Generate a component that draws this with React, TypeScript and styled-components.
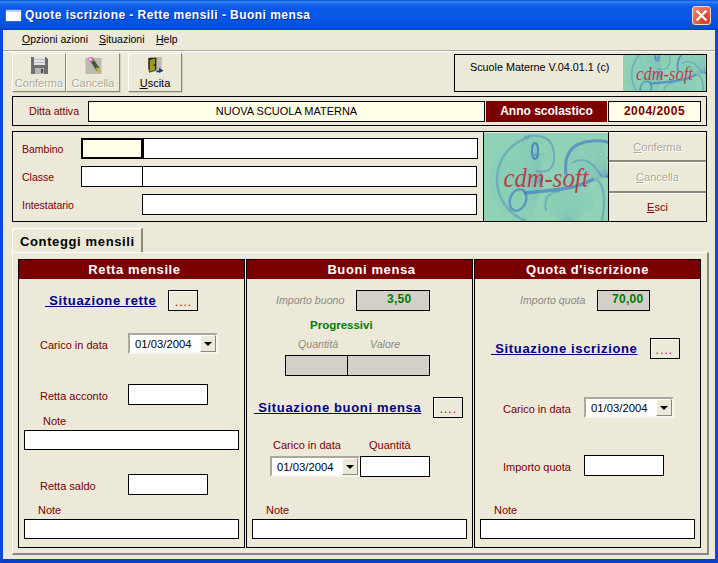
import React from 'react';
import styled, { createGlobalStyle } from 'styled-components';

const FACE = '#ece9d8';
const DARK_RED = '#7b0000';
const NAVY = '#00008b';
const GREEN = '#007b00';
const GREY_FIELD = '#d4d0c8';

const GlobalStyle = createGlobalStyle`
  html, body { margin: 0; padding: 0; background: ${FACE}; }
  body { font-family: "Liberation Sans", Arial, sans-serif; font-size: 11px; color: #000; }
  * { box-sizing: border-box; }
`;

const Window = styled.div`
  width: 718px;
  height: 563px;
  display: flex;
  flex-direction: column;
  overflow: hidden;
`;

const TitleBar = styled.div`
  height: 30px;
  flex: none;
  display: flex;
  align-items: center;
  padding: 0 7px 0 6px;
  background: linear-gradient(to bottom, #0a4fd8 0, #3a86f4 2px, #1a68ee 4px, #0a58e6 8px, #0655e4 20px, #0650d8 27px, #0440c4 30px);
`;

const AppIcon = styled.span`
  width: 15px;
  height: 11px;
  margin-top: 1px;
  background: #fff;
  border-top: 2px solid #bcd4fa;
  box-shadow: 0 0 1px #cfe0ff;
`;

const TitleText = styled.span`
  margin-left: 4px;
  color: #fff;
  font-weight: 700;
  font-size: 12px;
  letter-spacing: 0.45px;
  text-shadow: 1px 1px 0 #0a2f9c;
  white-space: nowrap;
`;

const CloseButton = styled.span`
  margin-left: auto;
  width: 19px;
  height: 19px;
  display: block;
  border: 1px solid #f4d8d0;
  border-radius: 3px;
  background: radial-gradient(circle at 70% 75%, #c83a18, #e8664a 55%, #f09078);
`;

const WindowBody = styled.div`
  flex: 1;
  display: flex;
  flex-direction: column;
  background: ${FACE};
  border-left: 3px solid #0a48dc;
  border-right: 3px solid #0a48dc;
  border-bottom: 4px solid #0a3fc8;
`;

const MenuBar = styled.div`
  height: 22px;
  flex: none;
  display: flex;
  padding: 2px 0 0 19px;
  border-bottom: 1px solid #fff;
  box-shadow: inset 0 -2px 0 -1px #aca899;
`;

const MenuItem = styled.span<{ $w: number }>`
  width: ${p => p.$w}px;
  font-size: 10.5px;
  line-height: 14px;
`;

const Key = styled.span`
  text-decoration: underline;
`;

const Toolbar = styled.div`
  height: 41px;
  flex: none;
  display: flex;
  align-items: flex-start;
  padding: 1px 8px 0 9px;
`;

const ToolButton = styled.div<{ $w: number; $left?: number; $off?: boolean }>`
  width: ${p => p.$w}px;
  height: 39px;
  margin-left: ${p => p.$left || 0}px;
  display: flex;
  flex-direction: column;
  align-items: center;
  padding-top: 3px;
  background: ${FACE};
  border: 1px solid;
  border-color: #fff #8a8876 #8a8876 #fff;
  box-shadow: 1px 1px 0 #d0cdbc;
  font-size: 11px;
  line-height: 12px;
  color: ${p => (p.$off ? '#aca899' : '#000')};
  text-shadow: ${p => (p.$off ? '1px 1px 0 #fff' : 'none')};
  svg { flex: none; margin-bottom: 3px; }
`;

const VersionPanel = styled.div`
  margin: 1px 0 0 auto;
  width: 253px;
  height: 38px;
  display: flex;
  border: 1px solid #000;
`;

const VersionText = styled.div`
  flex: 1;
  padding: 5px 0 0 15px;
  font-size: 10.8px;
  line-height: 14px;
`;

const VersionLogo = styled.div`
  width: 83px;
  flex: none;
  svg { display: block; }
`;

const Sections = styled.div`
  display: flex;
  flex-direction: column;
  padding: 0 8px 0 9px;
`;

const CompanyRow = styled.div`
  height: 30px;
  margin-top: 3px;
  display: flex;
  align-items: center;
  padding: 0 5px 0 16px;
  border: 1px solid #000;
`;

const CompanyLabel = styled.span`
  width: 59px;
  flex: none;
  color: ${DARK_RED};
  font-size: 10.6px;
`;

const CompanyName = styled.div`
  width: 397px;
  height: 21px;
  flex: none;
  display: flex;
  align-items: center;
  justify-content: center;
  background: #ffffe8;
  border: 1px solid #000;
  font-size: 11px;
`;

const YearCaption = styled.div`
  width: 121px;
  height: 21px;
  flex: none;
  margin-left: 1px;
  display: flex;
  align-items: center;
  justify-content: center;
  background: ${DARK_RED};
  color: #fff;
  font-weight: 700;
  font-size: 12px;
`;

const YearValue = styled.div`
  width: 93px;
  height: 21px;
  flex: none;
  margin-left: 1px;
  display: flex;
  align-items: center;
  justify-content: center;
  background: #ffffe8;
  border: 1px solid #000;
  color: ${DARK_RED};
  font-weight: 700;
  font-size: 12px;
  letter-spacing: 0.5px;
`;

const PupilPanel = styled.div`
  height: 91px;
  margin-top: 5px;
  display: flex;
  border: 1px solid #000;
`;

const PupilFields = styled.div`
  width: 471px;
  flex: none;
  display: flex;
  flex-direction: column;
  gap: 7px;
  padding: 6px 0 0 9px;
  border-right: 1px solid #000;
`;

const PupilRow = styled.div`
  height: 21px;
  display: flex;
  align-items: center;
`;

const PupilLabel = styled.span`
  width: 59px;
  flex: none;
  color: ${DARK_RED};
  font-size: 10.5px;
`;

const Box = styled.input<{ $w: number; $h?: number; $left?: number; $fill?: string; $thick?: boolean }>`
  width: ${p => p.$w}px;
  height: ${p => p.$h || 21}px;
  flex: none;
  margin: 0 0 0 ${p => p.$left || 0}px;
  padding: 0;
  display: block;
  background: ${p => p.$fill || '#fff'};
  border: ${p => (p.$thick ? 2 : 1)}px solid #000;
  border-radius: 0;
  outline: none;
`;

const PupilLogo = styled.div`
  width: 125px;
  flex: none;
  padding: 1px 0 0;
  border-right: 1px solid #000;
  svg { display: block; }
`;

const PupilActions = styled.div`
  flex: 1;
  display: flex;
  flex-direction: column;
`;

const ActionButton = styled.div<{ $off?: boolean }>`
  flex: 1;
  display: flex;
  align-items: center;
  justify-content: center;
  border-top: 1px solid #fff;
  border-bottom: 2px solid #8a8876;
  &:last-child { border-bottom: none; }
  font-size: 11px;
  color: ${p => (p.$off ? '#aca899' : DARK_RED)};
  text-shadow: ${p => (p.$off ? '1px 1px 0 #fff' : 'none')};
`;

const TabStrip = styled.div`
  height: 24px;
  margin-top: 6px;
  display: flex;
`;

const Tab = styled.div`
  width: 131px;
  height: 24px;
  padding: 5px 0 0 7px;
  background: ${FACE};
  border-top: 1px solid #fff;
  border-left: 1px solid #fff;
  border-right: 2px solid #8a8876;
  border-top-left-radius: 3px;
  font-weight: 700;
  font-size: 13px;
  line-height: 15px;
  letter-spacing: 0.63px;
  white-space: nowrap;
`;

const TabPanel = styled.div`
  width: 697px;
  height: 303px;
  padding: 6px 0 0 5px;
  border-top: 1px solid #fff;
  border-left: 1px solid #fff;
  border-right: 2px solid #8a8876;
  border-bottom: 2px solid #8a8876;
`;

const Columns = styled.div`
  display: grid;
  grid-template-columns: repeat(3, 227px);
  gap: 1px;
  height: 289px;
`;

const Column = styled.div`
  display: flex;
  flex-direction: column;
  border: 1px solid #000;
`;

const ColumnHead = styled.div<{ $shift?: number }>`
  height: 19px;
  flex: none;
  display: flex;
  align-items: center;
  justify-content: center;
  padding-left: ${p => p.$shift || 0}px;
  background: ${DARK_RED};
  color: #fff;
  font-weight: 700;
  font-size: 13px;
  letter-spacing: 0.6px;
`;

const Row = styled.div<{ $top: number; $left: number; $gap?: number }>`
  display: flex;
  align-items: center;
  flex: none;
  margin-top: ${p => p.$top}px;
  padding-left: ${p => p.$left}px;
  gap: ${p => p.$gap || 0}px;
`;

const Label = styled.span<{ $w?: number }>`
  width: ${p => (p.$w ? `${p.$w}px` : 'auto')};
  flex: none;
  color: ${DARK_RED};
  font-size: 11px;
  line-height: 13px;
  white-space: nowrap;
`;

// etichetta accanto a un campo: nell'originale sta un po' sotto il centro
const FieldLabel = styled(Label)`
  padding-top: 3px;
`;

const GhostLabel = styled.span<{ $w?: number }>`
  width: ${p => (p.$w ? `${p.$w}px` : 'auto')};
  flex: none;
  color: #8c8a7e;
  font-style: italic;
  font-size: 10.6px;
  line-height: 13px;
  white-space: nowrap;
`;

const Progress = styled.span`
  color: ${GREEN};
  font-weight: 700;
  font-size: 11.5px;
  line-height: 14px;
`;

const ReadOut = styled.div<{ $w: number; $left?: number; $pad?: number }>`
  width: ${p => p.$w}px;
  height: 21px;
  flex: none;
  margin-left: ${p => p.$left || 0}px;
  padding-left: ${p => p.$pad || 0}px;
  background: ${GREY_FIELD};
  border: 1px solid #000;
  color: ${GREEN};
  font-weight: 700;
  font-size: 12px;
  line-height: 16px;
  letter-spacing: 0.3px;
`;

const SituationLink = styled.span`
  flex: none;
  color: ${NAVY};
  font-weight: 700;
  font-size: 13px;
  line-height: 15px;
  letter-spacing: 0.65px;
  text-decoration: underline;
  white-space: pre;
`;

const DotsButton = styled.div`
  width: 30px;
  height: 21px;
  flex: none;
  display: flex;
  justify-content: center;
  padding-top: 1px;
  background: ${FACE};
  border: 1px solid #000;
  box-shadow: inset 1px 1px 0 #fff;
  color: #b00000;
  font-size: 12px;
  line-height: 20px;
  letter-spacing: 1px;
`;

const Combo = styled.div`
  width: 90px;
  height: 21px;
  flex: none;
  display: flex;
  align-items: center;
  justify-content: space-between;
  padding-left: 5px;
  background: #fff;
  border: 2px solid;
  border-color: #aca899 #f8f6ec #f8f6ec #aca899;
  font-size: 11.3px;
`;

const ComboArrow = styled.span`
  width: 16px;
  height: 17px;
  display: flex;
  align-items: center;
  justify-content: center;
  background: ${FACE};
  border: 1px solid;
  border-color: #fff #8a8876 #8a8876 #fff;
  &::before {
    content: '';
    border-left: 4px solid transparent;
    border-right: 4px solid transparent;
    border-top: 4px solid #000;
  }
`;

const DateCombo = () => (
  <Combo>
    01/03/2004
    <ComboArrow />
  </Combo>
);

// filo di linee tra un arco e un punto interno, come il disegno del logo
const fan = (cx: number, cy: number, r: number, a0: number, a1: number, n: number, ix: number, iy: number) => {
  let d = '';
  for (let i = 0; i <= n; i++) {
    const a = ((a0 + ((a1 - a0) * i) / n) * Math.PI) / 180;
    d += `M${(cx + r * Math.cos(a)).toFixed(1)} ${(cy + r * Math.sin(a)).toFixed(1)}L${ix} ${iy}`;
  }
  return d;
};

const Logo = ({ w, h, id }: { w: number; h: number; id: string }) => (
  <svg width={w} height={h} viewBox="0 0 124 88" preserveAspectRatio="xMidYMid slice">
    <defs>
      <filter id={id} x="-5%" y="-5%" width="110%" height="110%">
        <feGaussianBlur stdDeviation="0.7" />
      </filter>
    </defs>
    <rect width="124" height="88" fill="#8fd2b6" />
    <g fill="none" stroke="#3f72c0" filter={`url(#${id})`}>
      <path d={fan(50, 48, 45, 95, 275, 60, 58, 48)} strokeOpacity=".1" strokeWidth=".7" />
      <path d="M46 4A44 44 0 0 0 42 88" strokeOpacity=".35" strokeWidth="2.5" />
      <path d="M40 4Q68 -2 70 20T52 38" strokeOpacity=".4" strokeWidth="2" />
      <path d={fan(52, 20, 17, 0, 360, 40, 51, 22)} strokeOpacity=".1" strokeWidth=".6" />
      <ellipse cx="51" cy="18" rx="3" ry="8" strokeOpacity=".75" strokeWidth="2" />
      <ellipse cx="34" cy="67" rx="8" ry="11" strokeOpacity=".6" strokeWidth="2.4" transform="rotate(20 34 67)" />
      <path d="M82 42Q78 10 108 8T124 26" strokeOpacity=".6" strokeWidth="3" />
      <path d="M88 30Q104 20 118 44" strokeOpacity=".35" strokeWidth="2" />
      <path d={fan(109, 36, 29, 150, 290, 34, 124, 44)} strokeOpacity=".14" strokeWidth=".6" />
      <path d="M62 78Q58 60 76 58" strokeOpacity=".35" strokeWidth="2" />
      <path d={fan(84, 73, 26, 180, 360, 30, 84, 92)} strokeOpacity=".12" strokeWidth=".6" />
      <path d="M40 60Q62 58 78 56T110 46" strokeOpacity=".6" strokeWidth="3.5" />
      <path d="M112 46Q124 54 118 88" strokeOpacity=".35" strokeWidth="2.5" />
    </g>
    <text
      x="62"
      y="54"
      textAnchor="middle"
      fill="#b8404c"
      fontFamily='"Liberation Serif", serif'
      fontStyle="italic"
      fontSize="27"
      textLength="85"
      lengthAdjust="spacingAndGlyphs"
    >
      cdm-soft
    </text>
  </svg>
);

const FloppyIcon = () => (
  <svg width="17" height="17" viewBox="0 0 17 17">
    <path d="M0 0H15L17 2V17H0Z" fill="#6e6e6e" />
    <rect x="3" y="0" width="11" height="8" fill="#e4e4e4" />
    <rect x="3" y="2" width="11" height="1" fill="#bdbdbd" />
    <rect x="3" y="5" width="11" height="1" fill="#bdbdbd" />
    <rect x="4" y="11" width="9" height="6" fill="#b4b4b4" />
    <rect x="10" y="12" width="2" height="4" fill="#4a4a4a" />
  </svg>
);

const EraserIcon = () => (
  <svg width="17" height="17" viewBox="0 0 17 18">
    <rect x="0" y="1" width="17" height="17" fill="#bdbab0" />
    <path d="M3 1L7 0L15 12L12 15Z" fill="#3f5a2c" />
    <path d="M11 11L15 12L17 17L12 15Z" fill="#c8b048" />
    <path d="M2 1L7 0L9 4L5 6Z" fill="#d070c0" />
    <path d="M3 2L6 1L7 3L5 4Z" fill="#f0e0f0" />
  </svg>
);

const DoorIcon = () => (
  <svg width="17" height="17" viewBox="0 0 18 19">
    <rect x="3" y="0" width="13" height="15" fill="#bdbab0" />
    <path d="M1 1H10V14H1Z" fill="#1c1c00" />
    <path d="M2 3L9 1V15L2 17Z" fill="#9a9a20" stroke="#1c1c00" strokeWidth=".8" />
    <rect x="7" y="8" width="1" height="2" fill="#000" />
    <path d="M10 15H13V12L18 15.5L13 18V17H10Z" fill="#1a2f9c" />
  </svg>
);

const CloseGlyph = () => (
  <svg width="17" height="17" viewBox="0 0 17 17">
    <path d="M4.5 4.5L12.5 12.5M12.5 4.5L4.5 12.5" stroke="#fff" strokeWidth="2.4" strokeLinecap="square" />
  </svg>
);

const App: React.FC = () => {
  return (
    <Window>
      <GlobalStyle />
      <TitleBar>
        <AppIcon />
        <TitleText>Quote iscrizione - Rette mensili - Buoni mensa</TitleText>
        <CloseButton>
          <CloseGlyph />
        </CloseButton>
      </TitleBar>
      <WindowBody>
        <MenuBar>
          <MenuItem $w={77}>
            <Key>O</Key>pzioni azioni
          </MenuItem>
          <MenuItem $w={57}>
            <Key>S</Key>ituazioni
          </MenuItem>
          <MenuItem $w={30}>
            <Key>H</Key>elp
          </MenuItem>
        </MenuBar>
        <Toolbar>
          <ToolButton $w={54} $off>
            <FloppyIcon />
            Conferma
          </ToolButton>
          <ToolButton $w={54} $off>
            <EraserIcon />
            Cancella
          </ToolButton>
          <ToolButton $w={54} $left={8}>
            <DoorIcon />
            <span>
              <Key>U</Key>scita
            </span>
          </ToolButton>
          <VersionPanel>
            <VersionText>Scuole Materne V.04.01.1 (c)</VersionText>
            <VersionLogo>
              <Logo w={83} h={36} id="blur-small" />
            </VersionLogo>
          </VersionPanel>
        </Toolbar>
        <Sections>
          <CompanyRow>
            <CompanyLabel>Ditta attiva</CompanyLabel>
            <CompanyName>NUOVA SCUOLA MATERNA</CompanyName>
            <YearCaption>Anno scolastico</YearCaption>
            <YearValue>2004/2005</YearValue>
          </CompanyRow>
          <PupilPanel>
            <PupilFields>
              <PupilRow>
                <PupilLabel>Bambino</PupilLabel>
                <Box readOnly $w={62} $fill="#ffffe8" $thick />
                <Box readOnly $w={335} />
              </PupilRow>
              <PupilRow>
                <PupilLabel>Classe</PupilLabel>
                <Box readOnly $w={62} />
                <Box readOnly $w={335} $left={-1} />
              </PupilRow>
              <PupilRow>
                <PupilLabel>Intestatario</PupilLabel>
                <Box readOnly $w={335} $left={61} />
              </PupilRow>
            </PupilFields>
            <PupilLogo>
              <Logo w={124} h={88} id="blur-large" />
            </PupilLogo>
            <PupilActions>
              <ActionButton $off>
                <span>
                  <Key>C</Key>onferma
                </span>
              </ActionButton>
              <ActionButton $off>
                <span>
                  <Key>C</Key>ancella
                </span>
              </ActionButton>
              <ActionButton>
                <span>
                  <Key>E</Key>sci
                </span>
              </ActionButton>
            </PupilActions>
          </PupilPanel>
          <TabStrip>
            <Tab>Conteggi mensili</Tab>
          </TabStrip>
          <TabPanel>
            <Columns>
              <Column>
                <ColumnHead $shift={6}>Retta mensile</ColumnHead>
                <Row $top={11} $left={26} $gap={12}>
                  <SituationLink> Situazione rette</SituationLink>
                  <DotsButton>....</DotsButton>
                </Row>
                <Row $top={22} $left={21}>
                  <FieldLabel $w={88}>Carico in data</FieldLabel>
                  <DateCombo />
                </Row>
                <Row $top={30} $left={21}>
                  <FieldLabel $w={88}>Retta acconto</FieldLabel>
                  <Box readOnly $w={80} />
                </Row>
                <Row $top={10} $left={24}>
                  <Label>Note</Label>
                </Row>
                <Row $top={2} $left={5}>
                  <Box readOnly $w={215} $h={20} />
                </Row>
                <Row $top={24} $left={21}>
                  <FieldLabel $w={88}>Retta saldo</FieldLabel>
                  <Box readOnly $w={80} />
                </Row>
                <Row $top={9} $left={19}>
                  <Label>Note</Label>
                </Row>
                <Row $top={2} $left={5}>
                  <Box readOnly $w={215} $h={20} />
                </Row>
              </Column>
              <Column>
                <ColumnHead $shift={24}>Buoni mensa</ColumnHead>
                <Row $top={11} $left={29}>
                  <GhostLabel $w={80}>Importo buono</GhostLabel>
                  <ReadOut $w={74} $pad={30}>
                    3,50
                  </ReadOut>
                </Row>
                <Row $top={7} $left={63}>
                  <Progress>Progressivi</Progress>
                </Row>
                <Row $top={6} $left={51}>
                  <GhostLabel $w={72}>Quantità</GhostLabel>
                  <GhostLabel>Valore</GhostLabel>
                </Row>
                <Row $top={4} $left={38}>
                  <ReadOut $w={63} />
                  <ReadOut $w={83} $left={-1} />
                </Row>
                <Row $top={21} $left={7} $gap={12}>
                  <SituationLink> Situazione buoni mensa</SituationLink>
                  <DotsButton>....</DotsButton>
                </Row>
                <Row $top={21} $left={26}>
                  <Label $w={96}>Carico in data</Label>
                  <Label>Quantità</Label>
                </Row>
                <Row $top={4} $left={23}>
                  <DateCombo />
                  <Box readOnly $w={70} />
                </Row>
                <Row $top={27} $left={19}>
                  <Label>Note</Label>
                </Row>
                <Row $top={2} $left={5}>
                  <Box readOnly $w={215} $h={20} />
                </Row>
              </Column>
              <Column>
                <ColumnHead>Quota d'iscrizione</ColumnHead>
                <Row $top={11} $left={45}>
                  <GhostLabel $w={77}>Importo quota</GhostLabel>
                  <ReadOut $w={53} $pad={14}>
                    70,00
                  </ReadOut>
                </Row>
                <Row $top={27} $left={16} $gap={12}>
                  <SituationLink> Situazione iscrizione</SituationLink>
                  <DotsButton>....</DotsButton>
                </Row>
                <Row $top={38} $left={28}>
                  <FieldLabel $w={81}>Carico in data</FieldLabel>
                  <DateCombo />
                </Row>
                <Row $top={37} $left={28}>
                  <FieldLabel $w={81}>Importo quota</FieldLabel>
                  <Box readOnly $w={80} />
                </Row>
                <Row $top={28} $left={19}>
                  <Label>Note</Label>
                </Row>
                <Row $top={2} $left={5}>
                  <Box readOnly $w={215} $h={20} />
                </Row>
              </Column>
            </Columns>
          </TabPanel>
        </Sections>
      </WindowBody>
    </Window>
  );
};

export default App;
